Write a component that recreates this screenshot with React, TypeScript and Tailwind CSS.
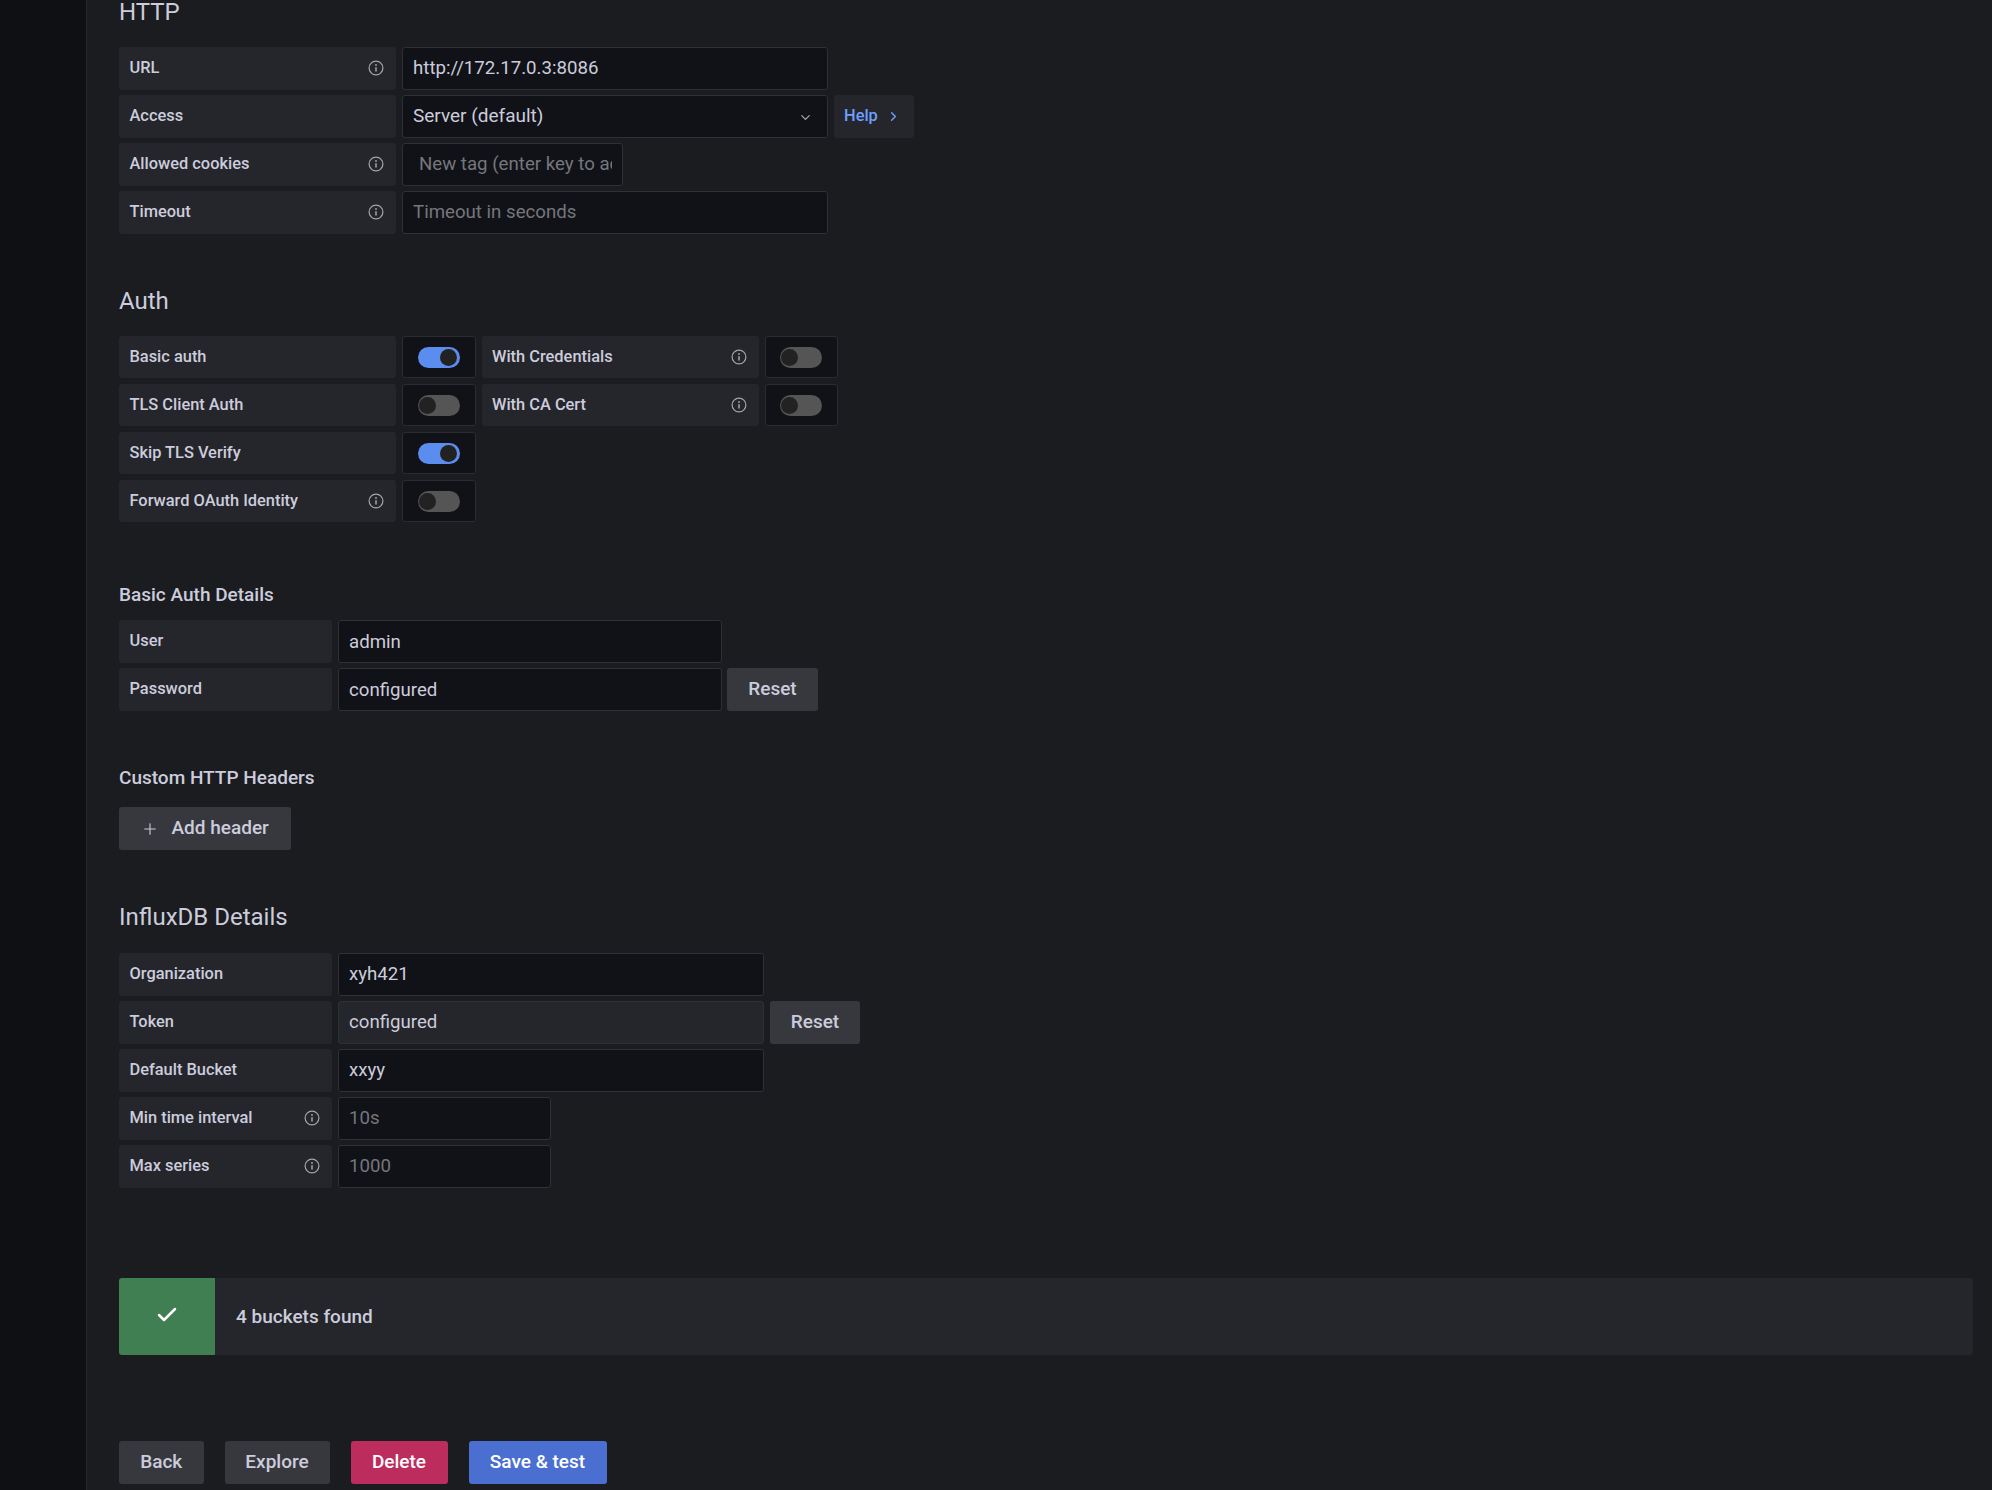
import { Check, ChevronDown, ChevronRight, Plus } from 'lucide-react';

const InfoIcon = () => (
  <svg viewBox="0 0 24 24" className="h-[18px] w-[18px] shrink-0 text-[#a5a6ad]" fill="currentColor">
    <path d="M12 2a10 10 0 1 0 0 20 10 10 0 0 0 0-20Zm0 18.4a8.4 8.4 0 1 1 0-16.8 8.4 8.4 0 0 1 0 16.8Z" />
    <rect x="11" y="10.6" width="2" height="6.4" rx="1" />
    <circle cx="12" cy="8" r="1.2" />
  </svg>
);

const Label = ({ text, info, width = 'w-[277px]' }: { text: string; info?: boolean; width?: string }) => (
  <div className={`flex h-full shrink-0 items-center justify-between rounded-[3px] bg-[#24262b] pl-[10.5px] pr-[11px] text-[16.4px] font-medium text-[#ccccdc] ${width}`}>
    <span>{text}</span>
    {info && <InfoIcon />}
  </div>
);

const Input = ({
  value,
  placeholder,
  width,
  muted,
  pad = 'pl-[10px] pr-[10px]',
}: {
  value?: string;
  placeholder?: string;
  width: string;
  muted?: boolean;
  pad?: string;
}) => (
  <input
    readOnly
    value={value ?? ''}
    placeholder={placeholder}
    className={`h-full rounded-[3px] border border-[#2e3035] text-[18.67px] text-[#ccccdc] outline-none placeholder:text-[#75767c] ${pad} ${width} ${muted ? 'bg-[#24262b]' : 'bg-[#111217]'}`}
  />
);

const Toggle = ({ on }: { on?: boolean }) => (
  <div className="flex h-full w-[73.5px] shrink-0 items-center justify-center rounded-[3px] border border-[#2a2c31] bg-[#111217] pt-[1px]">
    <div className={`flex h-[21px] w-[42px] items-center rounded-full ${on ? 'justify-end bg-[#5b8def] pr-[3px]' : 'justify-start bg-[#555555] pl-[1px]'}`}>
      <div className="h-[17px] w-[17px] rounded-full bg-[#222222]" />
    </div>
  </div>
);

const SecondaryButton = ({ text, width, className = '' }: { text: string; width: string; className?: string }) => (
  <button className={`flex h-full items-center justify-center rounded-[3px] bg-[#37383e] text-[19px] font-medium text-[#ccccdc] ${width} ${className}`}>
    {text}
  </button>
);

const Row = ({ children }: { children: React.ReactNode }) => (
  <div className="flex h-[42.67px] gap-[6px]">{children}</div>
);

const Rows = ({ children }: { children: React.ReactNode }) => (
  <div className="flex flex-col gap-[5.33px]">{children}</div>
);

const H3 = ({ children, className }: { children: React.ReactNode; className: string }) => (
  <h3 className={`h-[32px] text-[24px] leading-[32px] font-normal text-[#ccccdc] ${className}`}>{children}</h3>
);

const H5 = ({ children, className }: { children: React.ReactNode; className: string }) => (
  <h5 className={`h-[24px] text-[19px] leading-[24px] font-medium text-[#ccccdc] ${className}`}>{children}</h5>
);

export default function App() {
  return (
    <div className="flex h-[1490px] overflow-hidden bg-[#1a1c20] font-['Roboto',sans-serif]">
      <div className="w-[87px] shrink-0 border-r border-[#24262b] bg-[#0f1014]" />

      <main className="min-w-0 flex-1 pl-[32px] pr-[19px]">
        {/* HTTP */}
        <H3 className="-mt-[4px] mb-[19px]">HTTP</H3>
        <Rows>
          <Row>
            <Label text="URL" info />
            <Input value="http://172.17.0.3:8086" width="w-[426px]" />
          </Row>
          <Row>
            <Label text="Access" />
            <div className="flex h-full w-[426px] items-center justify-between rounded-[3px] border border-[#2e3035] bg-[#111217] pl-[10px] pr-[14px] text-[19px] text-[#ccccdc]">
              <span>Server (default)</span>
              <ChevronDown size={15} className="mt-[2px] text-[#a5a6ad]" />
            </div>
            <div className="flex h-full w-[80px] items-center gap-[8px] rounded-[3px] bg-[#24262b] pl-[10px] text-[16.4px] font-medium text-[#6e9fff]">
              Help
              <ChevronRight size={15} strokeWidth={2.25} />
            </div>
          </Row>
          <Row>
            <Label text="Allowed cookies" info />
            <Input placeholder="New tag (enter key to add)" width="w-[221px]" pad="pl-[16px] pr-[10px]" />
          </Row>
          <Row>
            <Label text="Timeout" info />
            <Input placeholder="Timeout in seconds" width="w-[426px]" />
          </Row>
        </Rows>

        {/* Auth */}
        <H3 className="mt-[51px] mb-[19px]">Auth</H3>
        <Rows>
          <Row>
            <Label text="Basic auth" />
            <Toggle on />
            <Label text="With Credentials" info />
            <Toggle />
          </Row>
          <Row>
            <Label text="TLS Client Auth" />
            <Toggle />
            <Label text="With CA Cert" info />
            <Toggle />
          </Row>
          <Row>
            <Label text="Skip TLS Verify" />
            <Toggle on />
          </Row>
          <Row>
            <Label text="Forward OAuth Identity" info />
            <Toggle />
          </Row>
        </Rows>

        {/* Basic auth details */}
        <H5 className="mt-[61px] mb-[13px]">Basic Auth Details</H5>
        <Rows>
          <Row>
            <Label text="User" width="w-[213px]" />
            <Input value="admin" width="w-[384px]" />
          </Row>
          <Row>
            <Label text="Password" width="w-[213px]" />
            <Input value="configured" width="w-[384px]" />
            <SecondaryButton text="Reset" width="w-[91px]" className="-ml-[1px]" />
          </Row>
        </Rows>

        {/* Custom headers */}
        <H5 className="mt-[55px] mb-[17px]">Custom HTTP Headers</H5>
        <button className="flex h-[42.67px] w-[172px] items-center gap-[12.5px] rounded-[3px] bg-[#37383e] pl-[22px] pt-[1px] text-[19px] font-medium text-[#ccccdc]">
          <Plus size={18} strokeWidth={1.5} />
          Add header
        </button>

        {/* InfluxDB */}
        <H3 className="mt-[51px] mb-[20.5px]">InfluxDB Details</H3>
        <Rows>
          <Row>
            <Label text="Organization" width="w-[213px]" />
            <Input value="xyh421" width="w-[426px]" />
          </Row>
          <Row>
            <Label text="Token" width="w-[213px]" />
            <Input value="configured" width="w-[426px]" muted />
            <SecondaryButton text="Reset" width="w-[90px]" />
          </Row>
          <Row>
            <Label text="Default Bucket" width="w-[213px]" />
            <Input value="xxyy" width="w-[426px]" />
          </Row>
          <Row>
            <Label text="Min time interval" info width="w-[213px]" />
            <Input placeholder="10s" width="w-[213px]" />
          </Row>
          <Row>
            <Label text="Max series" info width="w-[213px]" />
            <Input placeholder="1000" width="w-[213px]" />
          </Row>
        </Rows>

        {/* Alert */}
        <div className="mt-[90.5px] flex h-[77px] overflow-hidden rounded-[3px] bg-[#24262b]">
          <div className="flex w-[96px] shrink-0 items-center justify-center bg-[#3f7f52] pb-[4px]">
            <Check size={24} strokeWidth={2.5} className="text-white" />
          </div>
          <div className="flex items-center pl-[21px] pt-[1px] text-[19px] font-medium text-[#ccccdc]">4 buckets found</div>
        </div>

        {/* Actions */}
        <div className="mt-[86px] flex h-[42.67px] gap-[21px]">
          <SecondaryButton text="Back" width="w-[84.5px]" />
          <SecondaryButton text="Explore" width="w-[105px]" />
          <button className="h-full w-[97px] rounded-[3px] bg-[#bc2c5d] text-[19px] font-medium text-white">Delete</button>
          <button className="h-full w-[138px] rounded-[3px] bg-[#4a6fd0] text-[19px] font-medium text-white">Save &amp; test</button>
        </div>
      </main>
    </div>
  );
}
